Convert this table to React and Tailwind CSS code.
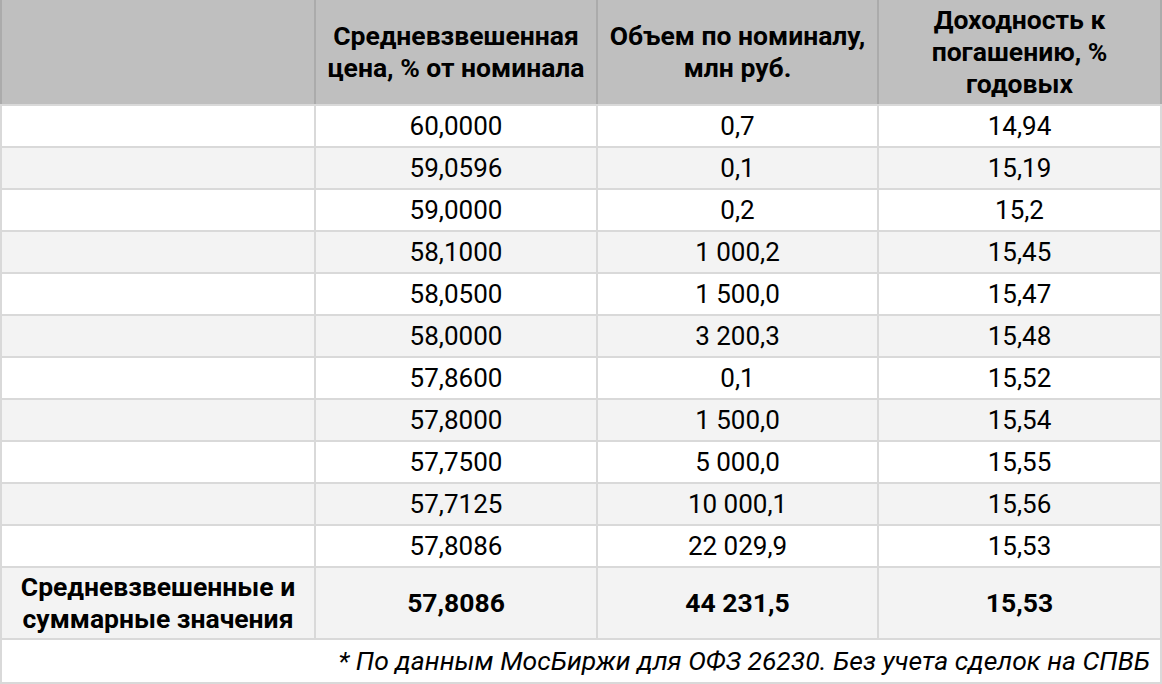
import React from 'react';

const rows = [
  ['60,0000', '0,7', '14,94'],
  ['59,0596', '0,1', '15,19'],
  ['59,0000', '0,2', '15,2'],
  ['58,1000', '1 000,2', '15,45'],
  ['58,0500', '1 500,0', '15,47'],
  ['58,0000', '3 200,3', '15,48'],
  ['57,8600', '0,1', '15,52'],
  ['57,8000', '1 500,0', '15,54'],
  ['57,7500', '5 000,0', '15,55'],
  ['57,7125', '10 000,1', '15,56'],
  ['57,8086', '22 029,9', '15,53'],
];

const cols = 'grid grid-cols-[316px_282px_281px_283px]';

export default function App() {
  return (
    <div className="w-[1162px] h-[684px] bg-white text-black text-[26px] font-['Roboto',sans-serif]">
      {/* header */}
      <div className={`${cols} h-[106px] bg-[#bfbfbf] border-b-2 border-[#d9d9d9] font-bold text-[26.5px] leading-[32px]`}>
        <div className="border-l-2 border-r-2 border-[#ababab]" />
        <div className="border-r-2 border-[#ababab] flex items-center justify-center text-center px-1">
          Средневзвешенная цена, % от номинала
        </div>
        <div className="border-r-2 border-[#ababab] flex items-center justify-center text-center px-1">
          Объем по номиналу, млн руб.
        </div>
        <div className="border-r-2 border-[#ababab] flex items-center justify-center text-center px-8">
          Доходность к погашению, % годовых
        </div>
      </div>

      {rows.map((r, i) => (
        <div
          key={i}
          className={`${cols} h-[42px] border-b-2 border-[#d9d9d9] ${i % 2 ? 'bg-[#f3f3f3]' : 'bg-white'}`}
        >
          <div className="border-l-2 border-r-2 border-[#d9d9d9]" />
          {r.map((v, j) => (
            <div key={j} className="border-r-2 border-[#d9d9d9] flex items-center justify-center">
              {v}
            </div>
          ))}
        </div>
      ))}

      {/* totals */}
      <div className={`${cols} h-[72px] bg-[#f3f3f3] border-b-2 border-[#d9d9d9] font-bold text-[26.5px] leading-[32px]`}>
        <div className="border-l-2 border-r-2 border-[#d9d9d9] flex items-center justify-center text-center px-1">
          Средневзвешенные и суммарные значения
        </div>
        <div className="border-r-2 border-[#d9d9d9] flex items-center justify-center">57,8086</div>
        <div className="border-r-2 border-[#d9d9d9] flex items-center justify-center">44 231,5</div>
        <div className="border-r-2 border-[#d9d9d9] flex items-center justify-center">15,53</div>
      </div>

      {/* note */}
      <div className="h-[44px] border-l-2 border-r-2 border-b-2 border-[#d9d9d9] flex items-center justify-end pr-[10px] italic text-[26.5px]">
        * По данным МосБиржи для ОФЗ 26230. Без учета сделок на СПВБ
      </div>
    </div>
  );
}
